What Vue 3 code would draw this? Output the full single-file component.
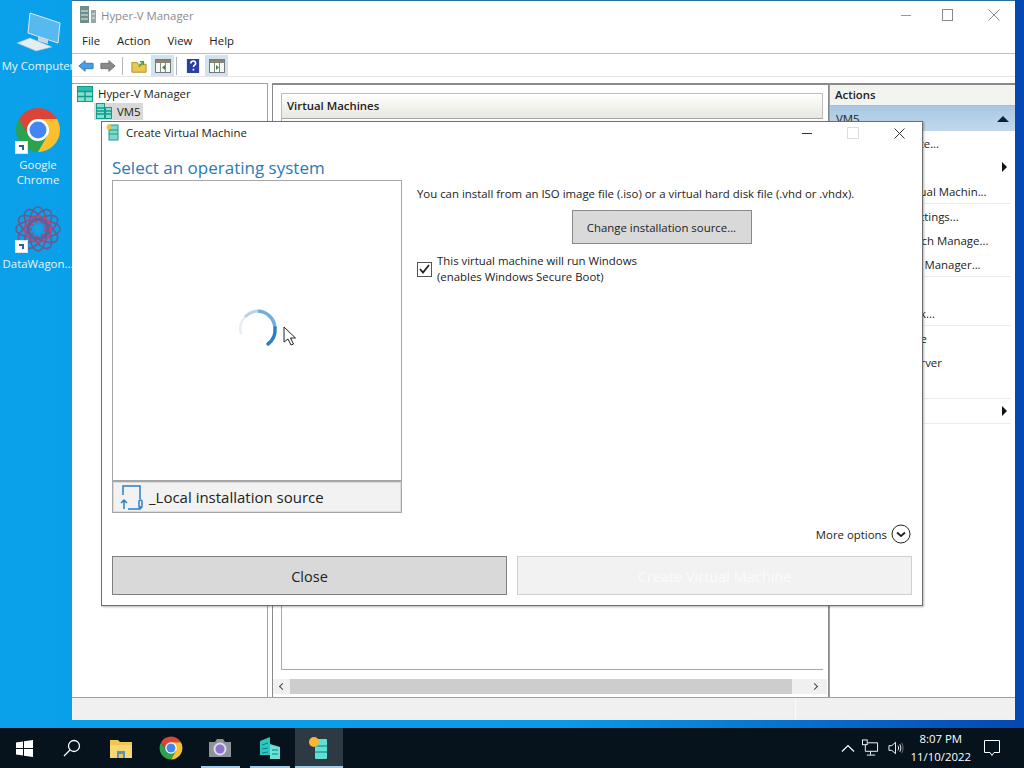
<script setup>
const menus = ['File', 'Action', 'View', 'Help']
const actionRows = [
  { text: 'Quick Create...' },
  { text: 'New', more: true },
  { text: 'Import Virtual Machin...', line: true },
  { text: 'Hyper-V Settings...' },
  { text: 'Virtual Switch Manage...' },
  { text: 'Virtual SAN Manager...', line: true },
  { text: 'Edit Disk...' },
  { text: 'Inspect Disk...', line: true },
  { text: 'Stop Service' },
  { text: 'Remove Server' },
  { text: 'Refresh', line: true },
  { text: 'View', more: true, line: true },
  { text: 'Help' }
]
const petals = [0, 30, 60, 90, 120, 150]
</script>

<template>
  <div class="desktop">
    <!-- Desktop icons -->
    <div class="desk-icon" style="top: 8px">
      <svg width="48" height="50" viewBox="0 0 48 50">
        <path d="M16 5 L46 15 L44 35 L14 25 Z" fill="#56b9f0" stroke="#d5ecf9" />
        <path d="M24 28 L34 32 L34 36 L24 33 Z" fill="#c8d6df" />
        <path d="M3 35 L16 30 L38 39 L22 43 Z" fill="#e4edf2" stroke="#a8bfcc" stroke-width=".5" />
      </svg>
      <span class="desk-label clip">My Computer</span>
    </div>
    <div class="desk-icon" style="top: 107px">
      <svg width="46" height="46" viewBox="0 0 46 46">
        <path d="M23 12 H42 A22 22 0 0 0 4 12 L13.500 28.500 Z" fill="#db4437" />
        <path d="M4 12 A22 22 0 0 0 23 45 L32.500 28.500 L13.500 28.500 Z" fill="#2ba24c" />
        <path d="M42 12 A22 22 0 0 1 23 45 L32.500 28.500 L23 12 Z" fill="#fbc02d" />
        <circle cx="23" cy="23" r="11" fill="#fff" />
        <circle cx="23" cy="23" r="8.500" fill="#4285f4" />
      </svg>
      <span class="shortcut" style="left: 15px; top: 34px"></span>
      <span class="desk-label">Google<br />Chrome</span>
    </div>
    <div class="desk-icon" style="top: 206px">
      <svg width="46" height="46" viewBox="0 0 46 46" fill="none" stroke-width="1.600">
        <ellipse v-for="p in petals" :key="p" cx="23" cy="23" rx="22" ry="9" stroke="#6b5a8e" :transform="`rotate(${p} 23 23)`" />
        <circle cx="23" cy="23" r="13" stroke="#b8487c" stroke-dasharray="4 2" stroke-width="2.500" />
        <circle cx="23" cy="23" r="7" stroke="#a64a80" stroke-dasharray="3 2" />
        <circle cx="23" cy="23" r="3.500" fill="#1f9fdc" stroke="none" />
      </svg>
      <span class="shortcut" style="left: 15px; top: 34px"></span>
      <span class="desk-label">DataWagon...</span>
    </div>

    <!-- Hyper-V Manager window -->
    <section class="manager">
      <header class="titlebar">
        <svg width="18" height="20" viewBox="0 0 18 20">
          <rect x="1" y="1" width="9" height="17" fill="#6f8f8c" />
          <rect x="12" y="5" width="5" height="13" fill="#9aa5a5" />
          <path d="M2 6h7M2 10h7M2 14h7M13 9h3M13 13h3" stroke="#e6eeee" />
        </svg>
        <span class="title-text">Hyper-V Manager</span>
        <div class="win-btns">
          <span class="wb-min"></span>
          <span class="wb-max"></span>
          <svg width="12" height="12" viewBox="0 0 12 12"><path d="M.5.5l11 11M11.500.5l-11 11" stroke="#8a8a8a" /></svg>
        </div>
      </header>
      <nav class="menubar">
        <span v-for="m in menus" :key="m">{{ m }}</span>
      </nav>
      <div class="toolbar">
        <svg width="16" height="14" viewBox="0 0 18 14"><path d="M1 7l7-6v3h9v6H8v3z" fill="#4a9fe0" stroke="#2f78b8" /></svg>
        <svg class="t-fwd" width="16" height="14" viewBox="0 0 18 14"><path d="M17 7l-7-6v3H1v6h9v3z" fill="#8a8a8a" stroke="#6f6f6f" /></svg>
        <i class="sep sep-a"></i>
        <svg class="t-folder" width="16" height="16" viewBox="0 0 18 16"><path d="M1 4h6l1 2h9v9H1z" fill="#e8c84e" stroke="#a78d2a" /><path d="M9 9l4-5M10 3h4v4" stroke="#3f9d3f" fill="none" stroke-width="1.500" /></svg>
        <span class="tool-on t-pane">
          <svg width="16" height="14" viewBox="0 0 16 14"><rect x=".5" y=".5" width="15" height="13" fill="#f7f7f7" stroke="#777" /><rect x="1" y="1" width="14" height="3" fill="#8a8373" /><path d="M5.500 4v9M10.500 4v9" stroke="#888" /><path d="M10 6l-3 2.500 3 2.500z" fill="#3a8a4a" /></svg>
        </span>
        <i class="sep sep-b"></i>
        <svg class="t-help" width="14" height="18" viewBox="0 0 16 18"><rect x="1" y="1" width="14" height="16" fill="#2b3f9f" /><path d="M5.500 6c0-3.500 5.500-3.500 5.500 0 0 2-2.500 2-2.500 4M8.500 12v2" stroke="#fff" fill="none" stroke-width="1.800" /></svg>
        <span class="tool-on t-act">
          <svg width="16" height="14" viewBox="0 0 16 14"><rect x=".5" y=".5" width="15" height="13" fill="#f7f7f7" stroke="#777" /><rect x="1" y="1" width="14" height="3" fill="#8a8373" /><path d="M5.500 4v9M10.500 4v9" stroke="#888" /><path d="M7 6l3 2.500-3 2.500z" fill="#3a8a4a" /></svg>
        </span>
      </div>
      <div class="panes">
        <aside class="tree">
          <div class="tree-row">
            <svg width="16" height="16" viewBox="0 0 16 16"><rect x=".5" y=".5" width="15" height="15" fill="#86e0d2" stroke="#149a8c" /><rect x="1" y="1" width="14" height="4" fill="#2dbfae" /><path d="M.5 5.500h15M.5 10.500h15M8 5.500v10" stroke="#149a8c" stroke-width="1.400" /></svg>
            <span>Hyper-V Manager</span>
          </div>
          <div class="tree-row child">
            <div class="picked">
              <svg width="16" height="16" viewBox="0 0 16 16"><rect x=".5" y=".5" width="8" height="15" fill="#86e0d2" stroke="#149a8c" /><rect x="9.500" y="4.500" width="6" height="11" fill="#86e0d2" stroke="#149a8c" /><path d="M1 5h7M1 8h7M1 11h7M10 8h5M10 11h5" stroke="#149a8c" stroke-width="1.300" /></svg>
              <span>VM5</span>
            </div>
          </div>
        </aside>
        <main class="center">
          <div class="vm-head">Virtual Machines</div>
          <div class="vm-list"></div>
          <div class="hscroll">
            <span class="tri-l"></span>
            <span class="thumb"></span>
            <span class="tri-r"></span>
          </div>
        </main>
        <aside class="actions">
          <div class="act-head">Actions</div>
          <div class="act-vm"><span>VM5</span><i class="up"></i></div>
          <div v-for="r in actionRows" :key="r.text" class="act-row" :class="{ lined: r.line }">
            <span>{{ r.text }}</span>
            <i v-if="r.more" class="arrow-r"></i>
          </div>
        </aside>
      </div>
      <footer class="status"><i class="status-split"></i></footer>
    </section>

    <!-- Create Virtual Machine dialog -->
    <section class="dialog">
      <header class="dlg-title">
        <svg width="14" height="17" viewBox="0 0 14 17"><rect x="3" y="1" width="9" height="15" fill="#7fdacb" stroke="#1b9c90" /><path d="M3 6h9M3 10h9" stroke="#1b9c90" /><circle cx="3" cy="3" r="2.500" fill="#f4c430" /></svg>
        <span class="dlg-name">Create Virtual Machine</span>
        <div class="dlg-btns">
          <span class="db-min"></span>
          <span class="db-max"></span>
          <svg width="11" height="11" viewBox="0 0 11 11"><path d="M.5.500l10 10M10.500.500l-10 10" stroke="#333" /></svg>
        </div>
      </header>
      <h1 class="dlg-h">Select an operating system</h1>
      <div class="dlg-main">
        <div class="os-col">
          <div class="os-list">
            <svg class="spinner" width="42" height="42" viewBox="0 0 42 42" fill="none" stroke-width="3.500">
              <path d="M4 26 A18 18 0 0 1 8 9" stroke="#e6edf2" stroke-width="2.500" />
              <path d="M8 9 A18 18 0 0 1 21 3" stroke="#b4d2e8" stroke-width="3" />
              <path d="M21 3 A18 18 0 0 1 38 20" stroke="#75aeda" />
              <path d="M38 20 A18 18 0 0 1 31 36" stroke="#2b7fc4" stroke-linecap="round" />
            </svg>
            <svg class="cursor" width="14" height="20" viewBox="0 0 14 20"><path d="M1 1v15l4-3 3 6 2.500-1-3-6h5z" fill="#fff" stroke="#222" /></svg>
          </div>
          <div class="os-source">
            <svg width="24" height="26" viewBox="0 0 24 26" fill="none" stroke="#2b7fc4" stroke-width="1.500">
              <path d="M3 11V2h17v13M20 22v3H8" />
              <rect x="19" y="16" width="3" height="8" rx="1.500" />
              <path d="M4 25v-9M1 19l3-3 3 3" />
            </svg>
            <span>_Local installation source</span>
          </div>
        </div>
        <div class="opt-col">
          <p class="opt-note">You can install from an ISO image file (.iso) or a virtual hard disk file (.vhd or .vhdx).</p>
          <button class="change-btn">Change installation source...</button>
          <label class="secure">
            <span class="check">
              <svg width="11" height="10" viewBox="0 0 11 10"><path d="M1 5l3 3.500L10 1" fill="none" stroke="#222" stroke-width="1.800" /></svg>
            </span>
            <span class="secure-text">This virtual machine will run Windows<br />(enables Windows Secure Boot)</span>
          </label>
          <div class="more">
            <span>More options</span>
            <svg width="20" height="20" viewBox="0 0 20 20" fill="none" stroke="#222"><circle cx="10" cy="10" r="9" /><path d="M6 8.500l4 3.500 4-3.500" stroke-width="1.800" /></svg>
          </div>
        </div>
      </div>
      <div class="dlg-foot">
        <button class="btn-close">Close</button>
        <button class="btn-create">Create Virtual Machine</button>
      </div>
    </section>

    <!-- Taskbar -->
    <footer class="taskbar">
      <div class="task-left">
        <span class="task-item">
          <svg width="17" height="17" viewBox="0 0 17 17" fill="#fff"><path d="M0 2.500l7-1v6.500H0zM8 1.300L17 0v8H8zM0 9h7v6.500l-7-1zM8 9h9v8l-9-1.300z" /></svg>
        </span>
        <span class="task-item">
          <svg width="18" height="18" viewBox="0 0 18 18" fill="none" stroke="#fff" stroke-width="1.300"><circle cx="11" cy="7" r="5.500" /><path d="M7 11l-6 6" /></svg>
        </span>
        <span class="task-item wide">
          <svg width="22" height="19" viewBox="0 0 22 19"><path d="M0 1h8l2 2h12v16H0z" fill="#f1c64f" /><rect x="0" y="6" width="22" height="13" fill="#f7d774" /><rect x="7" y="12" width="8" height="7" fill="#5a8fc4" /><rect x="9" y="15" width="4" height="4" fill="#f1c64f" /></svg>
        </span>
        <span class="task-item wide">
          <svg width="24" height="24" viewBox="0 0 46 46">
            <path d="M23 12 H42 A22 22 0 0 0 4 12 L13.500 28.500 Z" fill="#db4437" />
            <path d="M4 12 A22 22 0 0 0 23 45 L32.500 28.500 L13.500 28.500 Z" fill="#2ba24c" />
            <path d="M42 12 A22 22 0 0 1 23 45 L32.500 28.500 L23 12 Z" fill="#fbc02d" />
            <circle cx="23" cy="23" r="11" fill="#fff" />
            <circle cx="23" cy="23" r="8.500" fill="#4285f4" />
          </svg>
        </span>
        <span class="task-item wide running">
          <svg width="24" height="20" viewBox="0 0 24 20"><path d="M1 4h6l2-3h6l2 3h6v15H1z" fill="#8d9498" /><circle cx="12" cy="11" r="6.500" fill="#ded8ee" /><circle cx="12" cy="11" r="4.500" fill="#8e74c9" /></svg>
        </span>
        <span class="task-item wide running">
          <svg width="22" height="24" viewBox="0 0 22 24"><path d="M1 5l10-4v18H1z" fill="#2cc7c0" /><path d="M11 8l10 3v12H11z" fill="#6ae0d6" /><path d="M3 9l6-2M3 13l6-1M3 17l6-1M13 14h6M13 18h6" stroke="#0e7f80" /></svg>
        </span>
        <span class="task-item active">
          <svg width="22" height="24" viewBox="0 0 22 24"><rect x="7" y="3" width="12" height="20" rx="1" fill="#5fe0d4" /><path d="M7 10h12M7 16h12" stroke="#0e7f80" /><circle cx="6" cy="6" r="5" fill="#f7b733" /></svg>
        </span>
      </div>
      <div class="tray">
        <svg class="tray-up" width="14" height="8" viewBox="0 0 14 8" fill="none" stroke="#fff" stroke-width="1.200"><path d="M1 7.500l6-6 6 6" /></svg>
        <svg width="17" height="18" viewBox="0 0 18 18" fill="none" stroke="#fff"><path d="M3.500 5.500V12.500H16.500V3.500H6M9 13v3M5 16.500h9" /><rect x=".5" y=".5" width="5" height="5" /></svg>
        <svg class="tray-vol" width="16" height="14" viewBox="0 0 17 14" fill="none" stroke="#fff"><path d="M1 4.500h3l4-3.500v12l-4-3.500H1zM10.500 4.500c1 1.500 1 3.500 0 5M12.500 3c1.500 2 1.500 6 0 8" /><path d="M14.500 1.500c2 3 2 8 0 11" stroke="#777" /></svg>
        <div class="clock"><span>8:07 PM</span><span>11/10/2022</span></div>
        <svg width="16" height="17" viewBox="0 0 16 17" fill="none" stroke="#fff"><path d="M.5.500h15v12H10l-2 3-2-3H.5z" /></svg>
      </div>
    </footer>
  </div>
</template>

<style>
html, body { margin: 0; background: #0a9be6; }
</style>

<style scoped>
.desktop {
  position: relative;
  width: 1024px;
  height: 768px;
  overflow: hidden;
  background: linear-gradient(90deg, #0aa0ea 0%, #0a9be6 55%, #0547b3 100%);
  font-family: "Open Sans", "Noto Sans", sans-serif;
  font-size: 11.4px;
  color: #222;
}

.desk-icon {
  position: absolute;
  left: 0;
  width: 76px;
  display: flex;
  flex-direction: column;
  align-items: center;
  color: #e8f6fd;
}
.desk-label {
  line-height: 15px;
  text-align: center;
  margin-top: 4px;
  white-space: nowrap;
}
.desk-label.clip {
  margin-top: 0;
}
.shortcut {
  position: absolute;
  width: 11px;
  height: 11px;
  background: #fff;
  border: 1px solid #d8e5ee;
}
.shortcut::after {
  content: "";
  position: absolute;
  left: 3px;
  top: 3px;
  width: 5px;
  height: 5px;
  border-top: 2px solid #2c5fa8;
  border-right: 2px solid #2c5fa8;
  box-sizing: border-box;
}

.manager {
  position: absolute;
  left: 72px;
  top: 0;
  width: 943px;
  height: 720px;
  background: #fff;
  display: flex;
  flex-direction: column;
  box-shadow: inset 0 1px 0 #2a6f9c;
}
.titlebar {
  height: 30px;
  flex: none;
  display: flex;
  align-items: center;
  padding-left: 7px;
  gap: 4px;
}
.title-text {
  color: #8a8a8a;
}
.win-btns {
  margin-left: auto;
  display: flex;
  align-items: center;
  gap: 35px;
  padding-right: 15px;
}
.wb-min {
  width: 10px;
  height: 1px;
  background: #999;
  margin-right: -4px;
}
.wb-max {
  width: 9px;
  height: 10px;
  border: 1px solid #8a8a8a;
}
.menubar {
  height: 21px;
  padding: 0 0 2px 10px;
  flex: none;
  display: flex;
  align-items: center;
  gap: 17px;
  border-bottom: 1px solid #bdbdbd;
}
.toolbar {
  height: 21px;
  padding: 1px 0 0 6px;
  flex: none;
  display: flex;
  align-items: center;
  border-bottom: 1px solid #e4e4e4;
}
.sep {
  width: 1px;
  height: 18px;
  background: #b5b5b5;
}
.t-fwd { margin-left: 6px; }
.sep-a { margin-left: 6px; }
.t-folder { margin-left: 8px; }
.t-pane { margin-left: 4px; }
.sep-b { margin-left: 2px; }
.t-help { margin-left: 9px; }
.t-act { margin-left: 5px; }
.tool-on {
  width: 23px;
  height: 21px;
  display: flex;
  align-items: center;
  justify-content: center;
  background: #cfe4f3;
}
.panes {
  flex: 1;
  min-height: 0;
  display: flex;
  padding-top: 6px;
}
.tree {
  width: 195px;
  flex: none;
  border: 1px solid #a0a0a0;
  border-left: 0;
  border-bottom: 0;
  padding-top: 1px;
}
.tree-row {
  height: 17px;
  display: flex;
  align-items: center;
  gap: 5px;
  padding-left: 5px;
}
.tree-row.child {
  padding-left: 22px;
  height: 18px;
}
.picked {
  display: flex;
  align-items: center;
  gap: 5px;
  height: 17px;
  padding: 0 2px;
  background: #d9d9d9;
}
.center {
  width: 557px;
  margin-left: 4px;
  flex: none;
  border: 1px solid #8a8a8a;
  border-top-width: 2px;
  border-bottom: 0;
  background: #fff;
  box-sizing: border-box;
  padding: 8px 5px 0 8px;
  display: flex;
  flex-direction: column;
}
.vm-head {
  height: 25px;
  flex: none;
  box-sizing: border-box;
  line-height: 24px;
  font-weight: 600;
  padding-left: 5px;
  border: 1px solid #bdbdbd;
  border-bottom: 0;
  background: linear-gradient(#fff, #e8e7df);
}
.vm-list {
  flex: 1;
  background: #fff;
  border: 1px solid #a8a8a8;
  border-right: 0;
  margin-bottom: 9px;
}
.hscroll {
  height: 15px;
  flex: none;
  display: flex;
  align-items: center;
  gap: 5px;
  margin: 0 -4px 3px -8px;
  padding-left: 7px;
  background: #f0f0f0;
}
.thumb {
  flex: none;
  width: 502px;
  height: 15px;
  background: #cdcdcd;
}
.tri-l, .tri-r {
  width: 5px;
  height: 5px;
  flex: none;
  box-sizing: border-box;
  border-left: 1.500px solid #444;
  border-bottom: 1.500px solid #444;
  transform: rotate(45deg);
}
.tri-r {
  transform: rotate(225deg);
  margin-left: 15px;
}
.actions {
  position: relative;
  flex: 1;
  border-top: 2px solid #8a8a8a;
  border-left: 1px solid #a0a0a0;
  overflow: hidden;
}
.act-head {
  height: 20px;
  line-height: 20px;
  font-weight: 600;
  padding-left: 5px;
  background: #f3f3f0;
  border-bottom: 1px solid #b8b8b8;
}
.act-vm {
  height: 25px;
  display: flex;
  align-items: center;
  justify-content: space-between;
  padding: 0 6px;
  background: linear-gradient(#aac8e4, #c0d8ec);
}
.up {
  width: 0;
  height: 0;
  border: 6px solid transparent;
  border-top: 0;
  border-bottom-color: #0c1f3f;
}
.act-row {
  position: relative;
  height: 24px;
  display: flex;
  align-items: center;
  justify-content: space-between;
  padding: 0 8px 0 32px;
  white-space: nowrap;
}
.act-row.lined {
  height: 25px;
  padding-bottom: 1px;
  box-sizing: border-box;
}
.act-row.lined::after {
  content: "";
  position: absolute;
  left: 0;
  right: 4px;
  bottom: 0;
  height: 1px;
  background: #ececec;
}
.arrow-r {
  width: 0;
  height: 0;
  border: 5px solid transparent;
  border-right: 0;
  border-left-color: #111;
}
.status {
  position: relative;
  height: 23px;
  flex: none;
  background: #f0f0f0;
  border-top: 1px solid #a0a0a0;
  box-sizing: border-box;
}
.status-split {
  position: absolute;
  left: 723px;
  top: 0;
  bottom: 0;
  width: 1px;
  background: #fafafa;
}

.dialog {
  position: absolute;
  left: 101px;
  top: 121px;
  width: 822px;
  height: 485px;
  box-sizing: border-box;
  background: #fff;
  border: 1px solid #6f6f6f;
  box-shadow: 1px 1px 2px rgba(0, 0, 0, .3);
  display: flex;
  flex-direction: column;
  padding: 0 10px;
}
.dlg-title {
  height: 21px;
  flex: none;
  display: flex;
  align-items: center;
  gap: 6px;
  margin: 0 -10px;
  padding: 0 17px 0 4px;
}
.dlg-btns {
  margin-left: auto;
  display: flex;
  align-items: center;
  gap: 35px;
  padding-top: 1px;
}
.db-min {
  width: 10px;
  height: 1px;
  background: #333;
}
.db-max {
  width: 10px;
  height: 10px;
  border: 1px solid #ddd;
}
.dlg-h {
  margin: 13px 0 0;
  font-size: 17px;
  font-weight: 400;
  line-height: 24px;
  color: #2a7ab8;
}
.dlg-main {
  display: flex;
  flex: none;
}
.os-col {
  width: 290px;
  height: 333px;
  flex: none;
  display: flex;
  flex-direction: column;
  box-sizing: border-box;
  border: 1px solid #a6a6a6;
}
.os-list {
  position: relative;
  flex: 1;
}
.spinner {
  position: absolute;
  left: 124px;
  top: 127px;
}
.cursor {
  position: absolute;
  left: 170px;
  top: 145px;
}
.os-source {
  height: 30px;
  flex: none;
  display: flex;
  align-items: center;
  gap: 5px;
  padding-left: 7px;
  font-size: 15px;
  background: #f2f2f2;
  border-top: 2px solid #a6a6a6;
  box-shadow: inset 0 0 0 1px #dcdcdc;
}
.opt-col {
  flex: 1;
  padding-left: 15px;
  display: flex;
  flex-direction: column;
  align-items: flex-start;
}
.opt-note {
  margin: 5px 0 0;
  line-height: 17px;
  white-space: nowrap;
}
.change-btn {
  align-self: center;
  width: 180px;
  height: 34px;
  margin: 8px 0 0 -6px;
  background: #d9d9d9;
  border: 1px solid #8a8a8a;
  font: inherit;
  color: #222;
  padding: 0;
}
.secure {
  display: flex;
  align-items: center;
  margin: 9px 0 0 -1px;
}
.check {
  width: 13px;
  height: 13px;
  display: flex;
  align-items: center;
  justify-content: center;
  border: 1px solid #555;
  margin: 0 5px 0 1px;
}
.secure-text {
  line-height: 16px;
}
.more {
  align-self: flex-end;
  margin-top: auto;
  display: flex;
  align-items: center;
  gap: 4px;
  margin-bottom: -31px;
  margin-right: 1px;
}
.dlg-foot {
  display: flex;
  gap: 10px;
  margin-top: 43px;
}
.dlg-foot button {
  flex: 1;
  height: 39px;
  padding: 1px 0 0;
  box-sizing: border-box;
  font-family: inherit;
  font-size: 14.500px;
}
.btn-close {
  background: #d9d9d9;
  border: 1px solid #7f7f7f;
  color: #222;
}
.btn-create {
  background: #f2f2f2;
  border: 1px solid #d0d0d0;
  color: #fbfbfb;
}

.taskbar {
  position: absolute;
  left: 0;
  right: 0;
  bottom: 0;
  height: 40px;
  background: #06121c;
  display: flex;
  justify-content: space-between;
  color: #fff;
}
.task-left {
  display: flex;
}
.task-item {
  position: relative;
  width: 48px;
  height: 40px;
  display: flex;
  align-items: center;
  justify-content: center;
}
.task-item.wide {
  width: 49.750px;
}
.task-item.active {
  background: #2d3a43;
  box-shadow: inset 0 -2px 0 #9fcbe8;
}
.task-item.running::after {
  content: "";
  position: absolute;
  left: 5px;
  right: 5px;
  bottom: 0;
  height: 2px;
  background: #9fcbe8;
}
.tray {
  display: flex;
  align-items: center;
  padding-right: 24px;
  gap: 9px;
}
.tray-up {
  margin-right: -2px;
}
.tray-vol {
  margin-right: -2px;
}
.clock {
  display: flex;
  flex-direction: column;
  align-items: center;
  line-height: 18px;
  margin-right: 4px;
}
</style>
